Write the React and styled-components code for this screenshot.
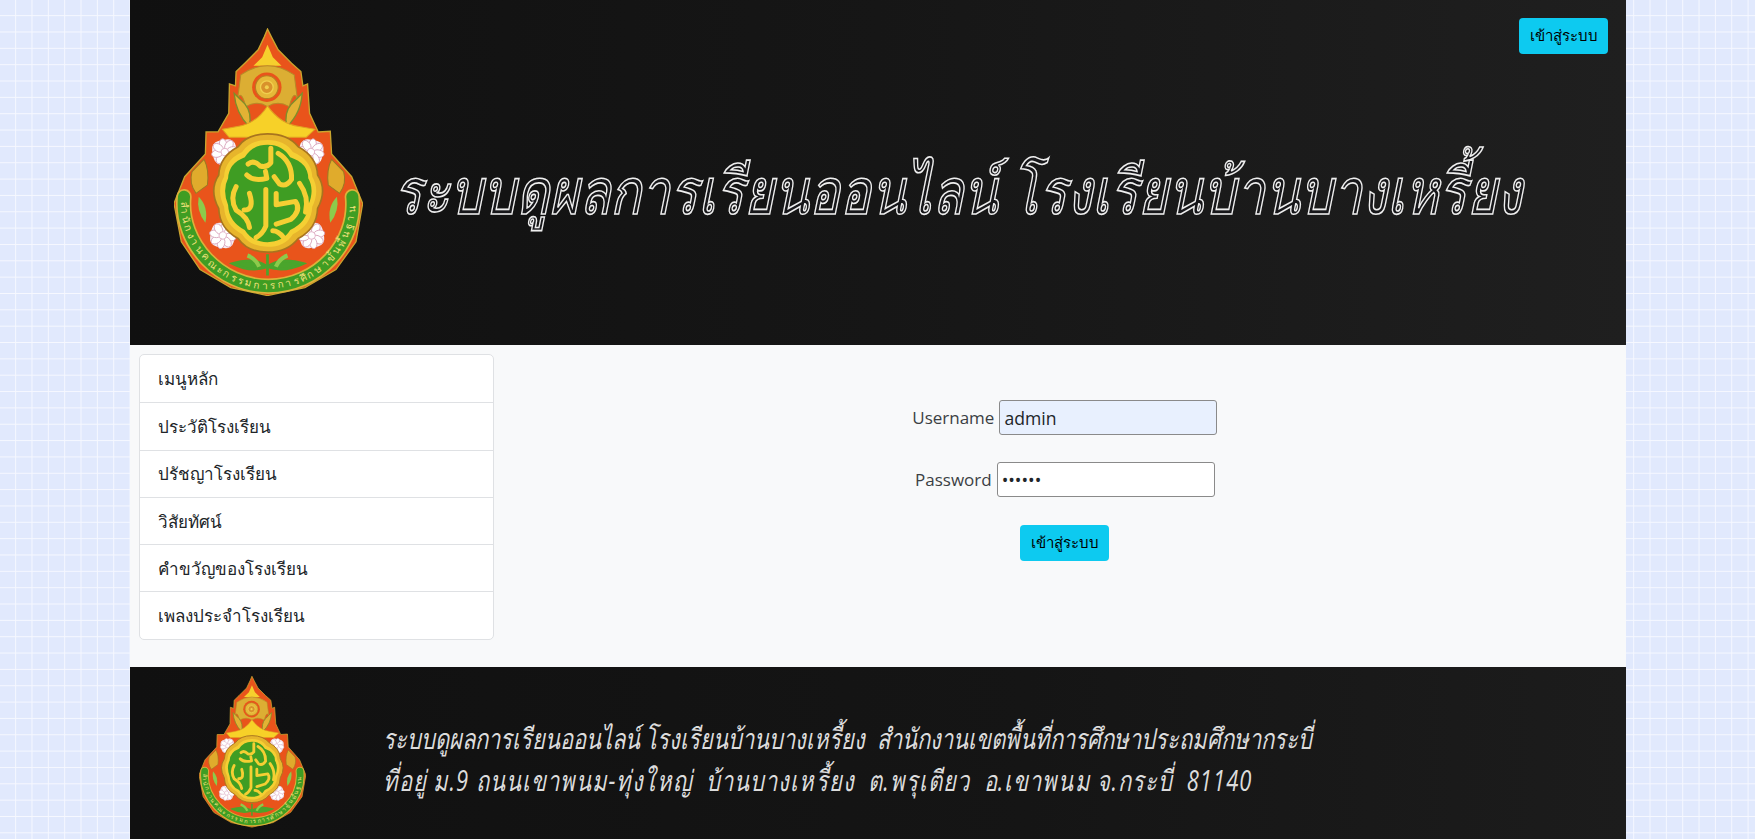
import styled, { createGlobalStyle } from "styled-components"

const GlobalStyle = createGlobalStyle`
  * { box-sizing: border-box; }
  html, body { margin: 0; padding: 0; }
  body {
    height: 839px;
    overflow: hidden;
    font-family: "Open Sans", "Noto Sans", "Liberation Sans", sans-serif;
    color: #212529;
    background-color: #e1e9fd;
    background-image:
      linear-gradient(to right, #f6f8ff 1.4px, transparent 1.4px),
      linear-gradient(to bottom, #f6f8ff 1.4px, transparent 1.4px);
    background-size: 16.35px 16.35px;
    background-position: -1.2px -1.2px;
  }
`

const Page = styled.div`
  width: 1496.5px;
  margin: 0 auto 0 129.5px;
`

const Banner = styled.header`
  position: relative;
  height: 345px;
  display: flex;
  align-items: flex-start;
  background: linear-gradient(90deg, #101010 0%, #161616 50%, #1f1f1f 100%);
`

const BannerLogo = styled.div`
  width: 189px;
  height: 268px;
  margin: 28px 0 0 44px;
  flex: none;
`

const BannerTitle = styled.h1`
  margin: 154px 0 0 31px;
  font-size: 51.3px;
  line-height: 70px;
  font-weight: 400;
  font-style: italic;
  white-space: nowrap;
  color: #17171a;
  -webkit-text-stroke: 1.3px #efefef;
  transform: scaleY(1.24);
  transform-origin: left center;
`

const Button = styled.button`
  width: 89px;
  height: 36px;
  padding: 0;
  border: none;
  border-radius: 4px;
  background: #0dcaf0;
  color: #000;
  font-family: inherit;
  font-size: 15px;
`

const SubmitButton = styled(Button)`
  margin-top: 1px;
`

const LoginCorner = styled.div`
  position: absolute;
  top: 18px;
  right: 18px;
`

const Content = styled.main`
  height: 322px;
  display: flex;
  background: #f8f9fa;
`

const Side = styled.nav`
  width: 25%;
  padding: 9px 9.5px;
  flex: none;
`

const MenuList = styled.ul`
  margin: 0;
  padding: 0;
  list-style: none;
  background: #fff;
  border: 1px solid #dfe1e4;
  border-radius: 5px;
`

const MenuItem = styled.li`
  height: 47.3px;
  padding-left: 18px;
  display: flex;
  align-items: center;
  font-size: 17px;
  border-top: ${(p) => (p.$first ? "none" : "1px solid #dfe1e4")};
`

const LoginForm = styled.form`
  flex: 1;
  padding-top: 55px;
  display: flex;
  flex-direction: column;
  align-items: center;
`

const Field = styled.div`
  height: 34px;
  margin-bottom: 28px;
  display: flex;
  align-items: center;
  gap: 5px;
`

const Label = styled.label`
  font-size: 17px;
  color: #3b3f44;
`

const Input = styled.input`
  width: 218px;
  height: 35px;
  padding: 1px 4px 0;
  border: 1px solid #8a8a8a;
  border-radius: 3px;
  background: ${(p) => (p.$filled ? "#e8f0fe" : "#fff")};
  color: #212529;
  font-family: inherit;
  font-size: 17.6px;
`

const Footer = styled.footer`
  height: 172px;
  display: flex;
  align-items: flex-start;
  background: linear-gradient(90deg, #101010 0%, #151515 60%, #1c1c1c 100%);
`

const FooterLogo = styled.div`
  width: 107px;
  height: 153px;
  margin: 8px 0 0 69px;
  flex: none;
`

const FooterText = styled.div`
  margin: 51px 0 0 77px;
  font-size: 22px;
  line-height: 31.5px;
  font-style: italic;
  color: #dcdcdc;
  transform: scaleY(1.3);
  transform-origin: left top;
`

const FooterLine = styled.div`
  white-space: pre;
  letter-spacing: ${(p) => (p.$spread ? "1.05px" : "0")};
`

const EmblemSvg = styled.svg`
  display: block;
  width: 100%;
  height: 100%;
`

const Lotus = ({ x, y, flip }) => (
  <g transform={`translate(${x} ${y}) rotate(${flip})`}>
    <rect x="-36" y="-36" width="72" height="72" rx="24" fill="#f7eef4" />
    {[0, 45, 90, 135, 180, 225, 270, 315].map((a) => (
      <ellipse key={a} cx="0" cy="-23" rx="11" ry="17" fill="#fff" stroke="#d7a3bb" strokeWidth="2.5" transform={`rotate(${a})`} />
    ))}
    <circle r="11" fill="#fff" stroke="#e3b6ca" strokeWidth="3" />
  </g>
)

const Emblem = () => (
  <EmblemSvg viewBox="160 85 566 802" aria-hidden="true">
    <path
      d="M440 88 L452 112 L472 150 L512 190 L540 215 L546 258 L560 252 L566 340 L592 396 L628 394 L632 462 L692 530 L725 610 L705 725 L645 808 L552 862 L440 886 L330 862 L238 808 L182 725 L160 610 L192 530 L254 462 L256 396 L292 396 L324 340 L326 252 L344 258 L346 215 L372 190 L412 150 L430 112 Z"
      fill="#e9541b"
      stroke="#c9a52e"
      strokeWidth="4"
    />
    <path d="M440 135 L456 172 L482 198 L398 198 L424 172 Z" fill="#f6cf2d" />
    <path d="M360 225 Q440 170 520 225 L530 300 Q520 265 505 320 Q470 300 440 320 Q410 300 375 320 Q360 265 350 300 Z" fill="#dcae33" stroke="#b78a28" strokeWidth="3" />
    <circle cx="438" cy="262" r="44" fill="#e9541b" />
    <circle cx="438" cy="262" r="34" fill="#e6b838" stroke="#b67d22" strokeWidth="3" />
    <circle cx="438" cy="262" r="19" fill="#d9922b" stroke="#f1cf4e" strokeWidth="4" />
    <circle cx="438" cy="262" r="6" fill="#f1cf4e" />
    <path d="M340 280 Q345 340 385 380 Q395 340 372 312 Q355 295 340 280 Z" fill="#e3b234" stroke="#7d8f2a" strokeWidth="4" />
    <path d="M544 280 Q540 340 498 380 Q488 340 512 312 Q530 295 544 280 Z" fill="#e3b234" stroke="#7d8f2a" strokeWidth="4" />
    <path d="M305 388 L350 380 Q405 372 440 318 Q478 372 535 380 L582 388 L556 412 L325 412 Z" fill="#f7d128" stroke="#e0a322" strokeWidth="3" />
    <path d="M214 515 L250 478 Q266 510 260 555 L226 580 Q204 550 214 515 Z" fill="#e0ab2c" stroke="#9a7a22" strokeWidth="3" />
    <path d="M668 515 L632 478 Q616 510 622 555 L656 580 Q678 550 668 515 Z" fill="#e0ab2c" stroke="#9a7a22" strokeWidth="3" />
    <path d="M234 590 Q264 620 254 668 Q226 632 234 590 Z" fill="#8ccb4b" />
    <path d="M648 590 Q618 620 628 668 Q656 632 648 590 Z" fill="#8ccb4b" />
    <path
      id="emblem-ring"
      d="M190 590 C176 730 300 858 442 858 C590 858 708 730 694 590"
      fill="none"
      stroke="#dcb23a"
      strokeWidth="46"
      strokeLinecap="round"
    />
    <path d="M190 590 C176 730 300 858 442 858 C590 858 708 730 694 590" fill="none" stroke="#3f9d23" strokeWidth="36" strokeLinecap="round" />
    <text fontSize="30" fill="#f3e27d" fontFamily="'Noto Sans', sans-serif">
      <textPath href="#emblem-ring" startOffset="2%" dominantBaseline="middle" textLength="780">
        สำนักงานคณะกรรมการการศึกษาขั้นพื้นฐาน
      </textPath>
    </text>
    <path d="M440 762 L440 826 M440 800 Q400 770 335 790 Q390 818 440 800 M440 800 Q480 770 548 790 Q490 818 440 800" fill="#4aa52c" stroke="#4aa52c" strokeWidth="8" />
    <path d="M380 766 Q405 775 415 800 M500 766 Q475 775 465 800" fill="none" stroke="#8ccb4b" strokeWidth="12" />
    <Lotus x={312} y={456} flip={-12} />
    <Lotus x={570} y={456} flip={12} />
    <Lotus x={306} y={706} flip={12} />
    <Lotus x={572} y={706} flip={-12} />
    <g transform="translate(270 390)">
      <path
        d="M170 12 Q230 12 262 50 Q318 80 320 135 Q350 180 320 235 Q318 295 262 325 Q230 366 170 366 Q110 366 82 325 Q26 295 24 235 Q-6 180 24 135 Q26 80 82 50 Q110 12 170 12 Z"
        fill="#e7b52c"
        stroke="#a8741f"
        strokeWidth="5"
      />
      <path
        d="M170 30 Q222 30 246 66 Q302 90 304 140 Q328 180 304 230 Q302 285 246 312 Q222 350 170 350 Q118 350 94 312 Q42 285 40 230 Q16 180 40 140 Q42 90 94 66 Q118 30 170 30 Z"
        fill="#f5cf33"
      />
      <path
        d="M170 44 Q216 44 238 82 Q292 100 292 145 Q312 180 292 225 Q290 275 238 300 Q216 336 170 336 Q124 336 102 300 Q54 275 52 225 Q34 180 52 145 Q54 100 102 82 Q124 44 170 44 Z"
        fill="#3f9d23"
      />
      <g fill="none" stroke="#f5cf33" strokeWidth="15" strokeLinecap="round" strokeLinejoin="round">
        <path d="M180 55 L180 98 Q168 114 148 108 Q128 88 112 102" />
        <path d="M108 135 Q128 155 168 145 L164 124" />
        <path d="M202 70 Q244 95 242 148 Q226 172 206 162 L190 140" />
        <path d="M76 170 Q56 205 76 240 Q112 262 116 292" />
        <path d="M165 178 L165 288 Q155 312 136 322" />
        <path d="M116 190 Q132 240 100 240" />
        <path d="M196 190 L196 224 L254 214 Q272 240 240 268 L196 282" />
        <path d="M266 160 Q295 200 284 246" />
        <path d="M186 302 Q202 302 218 322" />
      </g>
    </g>
  </EmblemSvg>
)

const menu = [
  "เมนูหลัก",
  "ประวัติโรงเรียน",
  "ปรัชญาโรงเรียน",
  "วิสัยทัศน์",
  "คำขวัญของโรงเรียน",
  "เพลงประจำโรงเรียน",
]

export default function App() {
  return (
    <>
      <GlobalStyle />
      <Page>
        <Banner>
          <BannerLogo>
            <Emblem />
          </BannerLogo>
          <BannerTitle>ระบบดูผลการเรียนออนไลน์ โรงเรียนบ้านบางเหรี้ยง</BannerTitle>
          <LoginCorner>
            <Button type="button">เข้าสู่ระบบ</Button>
          </LoginCorner>
        </Banner>
        <Content>
          <Side>
            <MenuList>
              {menu.map((m, i) => (
                <MenuItem key={m} $first={i === 0}>
                  {m}
                </MenuItem>
              ))}
            </MenuList>
          </Side>
          <LoginForm onSubmit={(e) => e.preventDefault()}>
            <Field>
              <Label htmlFor="username">Username</Label>
              <Input id="username" defaultValue="admin" $filled />
            </Field>
            <Field>
              <Label htmlFor="password">Password</Label>
              <Input id="password" type="password" defaultValue="123456" />
            </Field>
            <SubmitButton type="submit">เข้าสู่ระบบ</SubmitButton>
          </LoginForm>
        </Content>
        <Footer>
          <FooterLogo>
            <Emblem />
          </FooterLogo>
          <FooterText>
            <FooterLine>ระบบดูผลการเรียนออนไลน์ โรงเรียนบ้านบางเหรี้ยง  สำนักงานเขตพื้นที่การศึกษาประถมศึกษากระบี่</FooterLine>
            <FooterLine $spread>ที่อยู่ ม.9 ถนนเขาพนม-ทุ่งใหญ่  บ้านบางเหรี้ยง  ต.พรุเตียว  อ.เขาพนม จ.กระบี่  81140</FooterLine>
          </FooterText>
        </Footer>
      </Page>
    </>
  )
}
